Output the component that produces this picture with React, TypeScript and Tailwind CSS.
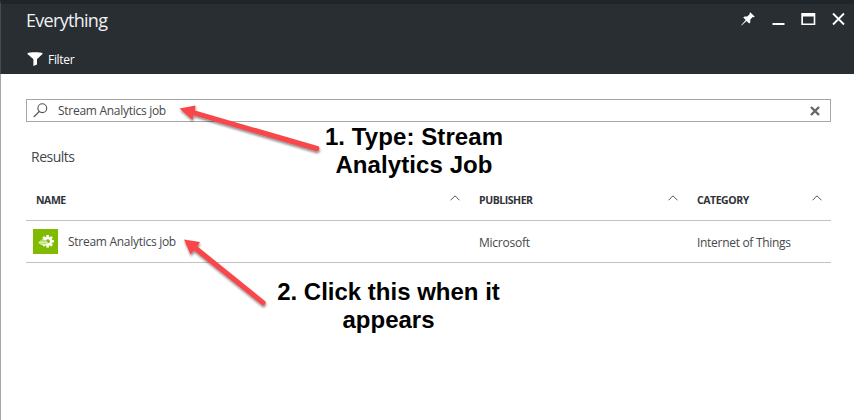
import type { ReactNode } from "react";

function Caret() {
  return (
    <svg className="h-[6px] w-[10px]" viewBox="0 0 10 6" fill="none" stroke="#5a5a5a" strokeWidth="1">
      <path d="M0.5 5.3 5 0.8l4.5 4.5" />
    </svg>
  );
}

function HeaderCell({ className, children }: { className: string; children: ReactNode }) {
  return (
    <div className={`flex items-center justify-between ${className}`}>
      <span className="mb-px text-[10.5px] leading-4 font-bold tracking-[-0.45px] text-[#2f3337]">{children}</span>
      <span className="mb-[5px] flex">
        <Caret />
      </span>
    </div>
  );
}

function StreamIcon() {
  const teeth = [0, 45, 90, 135, 180, 225, 270, 315];
  return (
    <svg className="h-[25px] w-[25px] shrink-0 bg-[#80ba01]" viewBox="0 0 25 25">
      <g fill="#fff">
        {teeth.map((a) => (
          <rect key={a} x="13.300" y="6" width="2.600" height="4" transform={`rotate(${a} 14.600 12.300)`} />
        ))}
        <circle cx="14.6" cy="12.3" r="4.6" />
      </g>
      <circle cx="14.8" cy="12.3" r="2.1" fill="#80ba01" />
      <path d="M5 13.5 9.500 10l4 1.700 1.500 2-3 2.300H8z" fill="#e0efc0" />
      <path d="M5 13.600c3-2 5-2 8.500-.5M7 15c2-1 4-1 6-.3M8 11.500c2-.4 3.500 0 5 .8" stroke="#9ac93a" strokeWidth=".6" fill="none" />
    </svg>
  );
}

export default function App() {
  return (
    <div className="relative h-[420px] w-[854px] overflow-hidden bg-white font-['Open_Sans','Noto_Sans',sans-serif] text-[#45484b]">
      <header className="h-[74px] border-t-4 border-l border-t-[#20252a] border-l-[#454b50] bg-[#292e33] pl-[25px] text-white">
        <div className="flex h-8 justify-between">
          <h1 className="text-[18px] leading-[33px] tracking-[-0.7px] text-[#f1f2f2]">Everything</h1>
          <div className="flex pt-2">
            <svg className="h-[14px] w-[14px]" viewBox="0 0 14 14" fill="#fff">
              <path d="M9.200.2 13.800 4.700 12.500 5.200 11.800 4.900 9.300 7.600 9.300 10.400 8.200 11.400 5.500 8.900.6 13.400.3 13.100 4.700 8 2.300 5.600 3.500 4.600 6.200 4.600 8.900 2.100 8.500 1.200z" />
            </svg>
            <svg className="ml-[17px] h-[14px] w-[13px]" viewBox="0 0 13 14">
              <path d="M.5 11h12v2H.5z" fill="#fff" />
            </svg>
            <svg className="ml-4 h-[14px] w-[15px]" viewBox="0 0 15 14">
              <path fill="#fff" fillRule="evenodd" d="M.3 1h14v12H.3zM2 4.500v7h10.700v-7z" />
            </svg>
            <svg className="mr-[9px] ml-[16px] h-[14px] w-[13px]" viewBox="0 0 13 14" stroke="#fff" strokeWidth="1.800">
              <path d="m1 1.500 11 11M12 1.500l-11 11" />
            </svg>
          </div>
        </div>
        <div className="flex h-[38px] items-center pt-2">
          <svg className="mb-px ml-px h-[14px] w-[16px]" viewBox="0 0 16 14" fill="#fff">
            <path d="M.3 1.500C.3-.2 15.700-.2 15.700 1.500 15.700 2.500 10 6.500 10 7.500v5L6.400 14V7.500C6.400 6.500.3 2.500.3 1.500z" />
          </svg>
          <span className="mt-[2px] ml-[5px] text-[12px] leading-4 font-medium tracking-[-0.3px]">Filter</span>
        </div>
      </header>

      <main className="h-[346px] border-l border-[#a6a6a6] pt-[25px] pr-[22px] pl-[25px]">
        <div className="mr-px flex h-[23px] items-center border border-[#a6a6a6] pr-[10px] pl-[6px]">
          <svg className="h-[15px] w-[15px]" viewBox="0 0 15 15" fill="none" stroke="#555" strokeWidth="1.100">
            <circle cx="9.300" cy="5.200" r="4.400" />
            <path d="M6.300 8.500.7 14" />
          </svg>
          <span className="ml-[10px] flex-1 text-[12px] leading-4 tracking-[-0.28px]">Stream Analytics job</span>
          <svg className="h-[10px] w-[10px]" viewBox="0 0 10 10" stroke="#666" strokeWidth="2.400">
            <path d="m1 1 8 8M9 1 1 9" />
          </svg>
        </div>

        <h2 className="mt-[25px] ml-[5px] text-[14px] leading-5 tracking-[-0.5px] text-[#44484b]">Results</h2>

        <div className="mt-[14px] mr-px flex h-10 items-center border-b border-[#c2c2c2] pl-[10px]">
          <HeaderCell className="w-[424px]">NAME</HeaderCell>
          <HeaderCell className="ml-[19px] w-[199px]">PUBLISHER</HeaderCell>
          <HeaderCell className="ml-[19px] w-[125px]">CATEGORY</HeaderCell>
        </div>
        <div className="mr-px flex h-[42px] items-center border-b border-[#c2c2c2] pl-[7px] text-[12px] leading-4">
          <StreamIcon />
          <span className="mt-px ml-[10px] w-[411px] tracking-[-0.28px]">Stream Analytics job</span>
          <span className="mt-[3px] w-[218px] tracking-[-0.25px]">Microsoft</span>
          <span className="mt-[3px] tracking-[-0.3px]">Internet of Things</span>
        </div>
      </main>

      <svg className="pointer-events-none absolute inset-0 h-[420px] w-[854px]" viewBox="0 0 854 420">
        <defs>
          <filter id="shadow" x="-10%" y="-10%" width="125%" height="130%">
            <feDropShadow dx="0.500" dy="2" stdDeviation="1.200" floodColor="#000" floodOpacity="0.450" />
          </filter>
        </defs>
        <g filter="url(#shadow)" fill="#f8464b">
          <path d="M179.500 108.500 195.500 105.500 195 110.500 318.500 146.300Q321 150 317 151.500L193.500 115.300 192.500 120z" />
          <path d="M184 239.500 200 242 197.500 246.500 265.500 301.500Q266.500 305 262.500 305.500L194 250.500 190.500 254.500z" />
        </g>
      </svg>
      <p className="absolute top-[123px] left-[314px] w-[200px] text-center font-['Liberation_Sans',Arial,sans-serif] text-[24px] leading-7 font-bold tracking-[0.08px] whitespace-pre text-black">{"1. Type: Stream\nAnalytics Job"}</p>
      <p className="absolute top-[278px] left-[268px] w-[241px] text-center font-['Liberation_Sans',Arial,sans-serif] text-[24px] leading-7 font-bold whitespace-pre text-black">{"2. Click this when it\nappears"}</p>
    </div>
  );
}
